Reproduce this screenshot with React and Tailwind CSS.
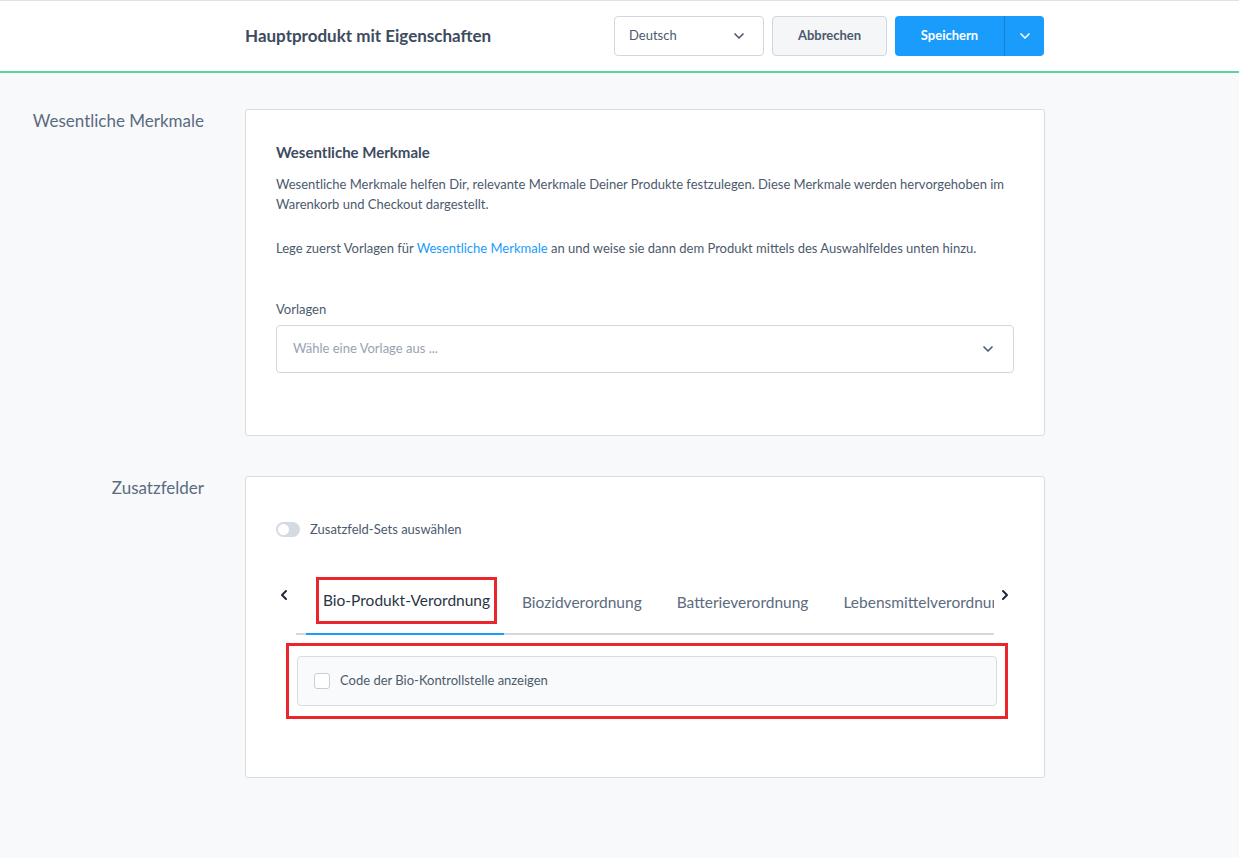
import { ChevronDown, ChevronLeft, ChevronRight } from 'lucide-react';

const tabs = ['Biozidverordnung', 'Batterieverordnung', 'Lebensmittelverordnung'];

function Header() {
    return (
        <header className="bg-white border-t border-[#dfe3e8] border-b-2 border-b-[#5dd39e] h-[73px]">
            <div className="w-[799px] ml-[245px] h-full flex items-center">
                <h1 className="text-[17px] font-bold text-[#3d4b5e] flex-1">Hauptprodukt mit Eigenschaften</h1>
                <button className="w-[150px] h-10 bg-white border border-[#d1d7df] rounded flex items-center justify-between pl-[14px] pr-[16px] text-[13px] text-[#4c5a6d]">
                    Deutsch
                    <ChevronDown className="w-4 h-4 text-[#4c5a6d]" strokeWidth={2.5} />
                </button>
                <button className="ml-[8px] w-[115px] h-10 bg-[#f5f6f8] border border-[#d1d7df] rounded text-[13px] font-bold text-[#4c5a6d]">
                    Abbrechen
                </button>
                <div className="ml-[8px] flex h-10 rounded overflow-hidden bg-[#1a9cfc]">
                    <button className="w-[109px] text-[13px] font-bold text-white">Speichern</button>
                    <span className="w-px bg-[#1482d6]" />
                    <button className="w-[39px] flex items-center justify-center text-white">
                        <ChevronDown className="w-4 h-4" strokeWidth={2.5} />
                    </button>
                </div>
            </div>
        </header>
    );
}

function Section({ label, children, className }) {
    return (
        <div className={`flex ${className}`}>
            <div className="w-[205px] pr-[1px] text-right text-[17px] leading-[22px] text-[#5b6b80] pt-[1px]">{label}</div>
            <div className="ml-[40px] w-[800px] bg-white border border-[#d8dde4] rounded-[3px]">
                {children}
            </div>
        </div>
    );
}

export default function App() {
    return (
        <div className="min-h-[858px] bg-[#f8f9fb] font-['Lato',sans-serif]">
            <Header />
            <main className="pt-[36px]">
                <Section label="Wesentliche Merkmale">
                    <div className="pl-[30px] pr-[30px] pt-[31px] pb-[62px]">
                        <h2 className="text-[15px] font-bold text-[#3d4b5e]">Wesentliche Merkmale</h2>
                        <p className="mt-[10px] text-[13px] leading-[20px] text-[#4c5a6d]">
                            Wesentliche Merkmale helfen Dir, relevante Merkmale Deiner Produkte festzulegen. Diese Merkmale werden hervorgehoben im Warenkorb und Checkout dargestellt.
                        </p>
                        <p className="mt-[24px] text-[13px] leading-[20px] text-[#4c5a6d]">
                            Lege zuerst Vorlagen für <a className="text-[#1a9cfc]">Wesentliche Merkmale</a> an und weise sie dann dem Produkt mittels des Auswahlfeldes unten hinzu.
                        </p>
                        <label className="block mt-[42px] text-[13px] text-[#4c5a6d]">Vorlagen</label>
                        <div className="mt-[6px] h-[48px] border border-[#d1d7df] rounded flex items-center justify-between pl-[16px] pr-[17px]">
                            <span className="text-[13px] text-[#98a2b1]">Wähle eine Vorlage aus ...</span>
                            <ChevronDown className="w-4 h-4 text-[#4c5a6d]" strokeWidth={2.5} />
                        </div>
                    </div>
                </Section>

                <Section label="Zusatzfelder" className="mt-[40px]">
                    <div className="pt-[43px] pb-[58px]">
                        <div className="pl-[30px] flex items-center gap-[10px]">
                            <span className="w-[24px] h-[15px] rounded-full bg-[#d3dae2] flex items-center px-[2px]">
                                <span className="w-[11px] h-[11px] rounded-full bg-white" />
                            </span>
                            <span className="text-[13px] text-[#4c5a6d]">Zusatzfeld-Sets auswählen</span>
                        </div>

                        <div className="mt-[37px] flex items-start">
                            <div className="w-[50px] pt-[10px] flex justify-end pr-[4px]">
                                <ChevronLeft className="w-4 h-4 text-[#1f2937]" strokeWidth={3} />
                            </div>
                            <div className="w-[698px]">
                                <div className="flex overflow-hidden whitespace-nowrap">
                                    <div className="ml-[10px] w-[198px] shrink-0 pb-[9px] pl-[10px]">
                                        <span className="inline-block border-[3px] border-[#e8262b] px-[4px] py-[9px] text-[15.5px] text-[#2a3544]">Bio-Produkt-Verordnung</span>
                                    </div>
                                    {tabs.map(tab => (
                                        <div key={tab} className="shrink-0 pl-[18px] pr-[17px] pt-[14px] text-[15.5px] text-[#5b6b80]">{tab}</div>
                                    ))}
                                </div>
                                <div className="h-[2px] bg-[#d3d8de]">
                                    <div className="ml-[10px] w-[198px] h-[2px] bg-[#1a9cfc]" />
                                </div>
                            </div>
                            <div className="pt-[10px] pl-[3px]">
                                <ChevronRight className="w-4 h-4 text-[#1f2937]" strokeWidth={3} />
                            </div>
                        </div>

                        <div className="mt-[8px] ml-[40px] w-[722px] border-[3px] border-[#e8262b] px-[8px] pt-[10px] pb-[10px]">
                            <div className="h-[50px] bg-[#f9fafb] border border-[#d8dde4] rounded flex items-center pl-[16px] gap-[10px]">
                                <span className="w-[16px] h-[16px] bg-white border border-[#c6ced8] rounded-[3px]" />
                                <span className="text-[13px] text-[#4c5a6d]">Code der Bio-Kontrollstelle anzeigen</span>
                            </div>
                        </div>
                    </div>
                </Section>
            </main>
        </div>
    );
}
